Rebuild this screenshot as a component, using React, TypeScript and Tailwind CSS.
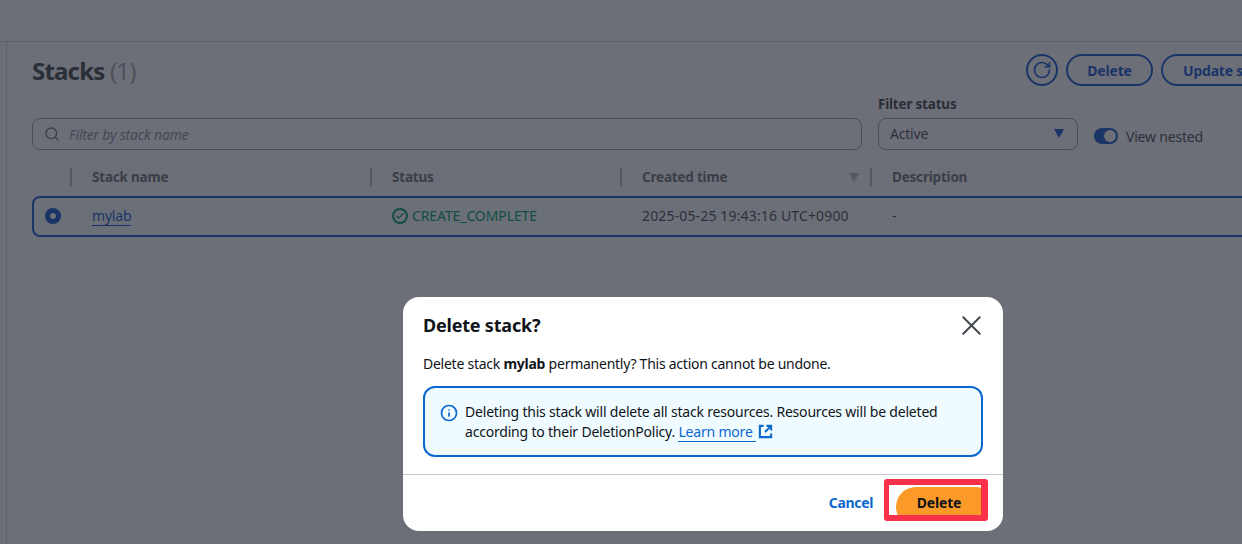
import React from 'react';
import { Check, Info, RotateCw, Search, X } from 'lucide-react';

const font = { fontFamily: '"Noto Sans", "Open Sans", sans-serif' };

const HeaderCell = ({ label, width, caret }: { label: string; width: string; caret?: boolean }) => (
  <div className={`flex items-center h-[19px] border-l-2 border-[#bcbcbc] pl-5 pr-3 font-bold text-[#6f7272] text-[13.5px] tracking-[-0.2px] ${width}`}>
    <span className="flex-1 whitespace-nowrap">{label}</span>
    {caret && <span className="w-0 h-0 border-x-[5px] border-x-transparent border-t-[9px] border-t-[#bcbcbc] mr-[-1px]"></span>}
  </div>
);

const StacksPage = () => (
  <div className="w-[1242px] h-[544px] bg-white text-[#4a4d52] overflow-hidden">
    <div className="h-[42px] border-b border-[#d3d4d6]"></div>
    <div className="ml-[6px] h-[502px] border-l border-[#d3d4d6] pl-[25px]">
      <div className="flex items-start w-[1300px] pt-[12px]">
        <h1 className="w-[994px] pt-px text-[24px] leading-[32px] font-bold tracking-[-0.8px] text-[#424542]">
          Stacks <span className="font-normal text-[#a5a8ab]">(1)</span>
        </h1>
        <div className="flex items-center gap-2">
          <button className="w-8 h-8 rounded-full border-2 border-[#1558d0] text-[#1558d0] flex items-center justify-center">
            <RotateCw size={20} strokeWidth={2} />
          </button>
          <button className="w-[87px] h-8 rounded-full border-2 border-[#1558d0] text-[#1558d0] text-[14px] font-bold tracking-[-0.2px]">Delete</button>
          <button className="w-[150px] h-8 rounded-full border-2 border-[#1558d0] text-[#1558d0] text-[14px] font-bold tracking-[-0.2px] text-left pl-5 whitespace-nowrap">Update stack</button>
        </div>
      </div>
      <div className="flex items-end mt-[7px]">
        <div className="w-[830px] h-8 rounded-lg border border-[#a0a2a4] flex items-center pl-[11px]">
          <Search size={16} className="text-[#6f7272]" strokeWidth={2} />
          <span className="ml-[9px] text-[14px] italic tracking-[-0.2px] text-[#8f9296]">Filter by stack name</span>
        </div>
        <div className="ml-4 w-[200px]">
          <div className="text-[13.5px] leading-[20px] font-bold tracking-[-0.2px] text-[#424542] mb-[4px]">Filter status</div>
          <div className="h-8 rounded-lg border border-[#a0a2a4] flex items-center justify-between pl-[11px] pr-[13px] pb-[2px] text-[14px] tracking-[-0.2px]">
            <span>Active</span>
            <span className="w-0 h-0 border-x-[5px] border-x-transparent border-t-[9px] border-t-[#1558d0]"></span>
          </div>
        </div>
        <div className="ml-4 h-8 flex items-center gap-2 pt-[4px]">
          <div className="w-6 h-4 rounded-full bg-[#1558d0] flex items-center justify-end pr-[2px]">
            <div className="w-3 h-3 rounded-full bg-white"></div>
          </div>
          <span className="text-[14px] tracking-[-0.2px] whitespace-nowrap">View nested</span>
        </div>
      </div>
      <div className="flex items-center mt-[18px] ml-[38px] w-[1300px]">
        <HeaderCell label="Stack name" width="w-[300px]" />
        <HeaderCell label="Status" width="w-[250px]" />
        <HeaderCell label="Created time" width="w-[250px]" caret />
        <HeaderCell label="Description" width="w-[300px]" />
      </div>
      <div className="flex items-center mt-[9px] h-[41px] w-[1300px] pb-[2px] rounded-l-lg border-2 border-[#1558d0] bg-[#fbffff] text-[14px]">
        <div className="w-[37px] pl-[11px]">
          <div className="w-4 h-4 rounded-full border-[5px] border-[#1558d0] bg-white"></div>
        </div>
        <div className="w-[300px] pl-[21px]">
          <span className="text-[#1558d0] border-b border-[#1558d0] tracking-[-0.2px]">mylab</span>
        </div>
        <div className="w-[250px] pl-[21px] flex items-center gap-1 text-[#00a060]">
          <span className="w-4 h-4 rounded-full border-2 border-[#00a060] flex items-center justify-center">
            <Check size={10} strokeWidth={3} />
          </span>
          <span className="tracking-[-0.1px]">CREATE_COMPLETE</span>
        </div>
        <div className="w-[250px] pl-[21px] whitespace-nowrap tracking-[0.15px]">2025-05-25 19:43:16 UTC+0900</div>
        <div className="pl-[21px]">-</div>
      </div>
    </div>
  </div>
);

const DeleteDialog = () => (
  <div className="absolute inset-0 bg-[rgba(29,34,48,0.65)] pl-[403px] pt-[297px]">
    <div className="w-[600px] h-[234px] bg-white rounded-2xl text-[#0f141a] text-[14px] tracking-[-0.2px]">
      <div className="flex items-center justify-between h-[56px] pl-5 pr-[15px]">
        <h2 className="text-[18px] font-bold">Delete stack?</h2>
        <X size={33} strokeWidth={1.4} className="text-[#424650]" />
      </div>
      <div className="px-5">
        <p className="leading-[20px] pt-px tracking-[-0.25px]">
          Delete stack <b>mylab</b> permanently? This action cannot be undone.
        </p>
        <div className="mt-[12px] h-[71px] rounded-xl border-2 border-[#0b68cf] bg-[#f0fbff] flex pl-[16px] pr-4 pt-[14px]">
          <Info size={18} strokeWidth={2.3} className="text-[#0b68cf] shrink-0 mt-[2px] ml-[-1px]" />
          <p className="ml-[7px] leading-[20px]">
            Deleting this stack will delete all stack resources. Resources will be deleted
            <br />
            according to their DeletionPolicy.{' '}
            <span className="text-[#0b68cf] border-b border-[#0b68cf] pr-[3px]">Learn more</span>
            <svg width="15" height="15" viewBox="0 0 16 16" fill="none" stroke="#0b68cf" strokeWidth="2.2" className="inline ml-[2px] align-[-2px]">
              <path d="M6 2H2v12h12v-4" />
              <path d="M9 2h5v5" />
              <path d="M14 2 7.5 8.5" />
            </svg>
          </p>
        </div>
      </div>
      <div className="mt-[17px] border-t border-[#c6c6cd] flex justify-end items-start pr-[15px] pt-[4px]">
        <span className="font-bold text-[#0b68cf] mt-[13px] mr-[11px] tracking-[-0.35px]">Cancel</span>
        <div className="w-[104px] h-[42px] border-y-[6px] border-l-[5px] border-r-[7px] border-[#f8304a] rounded-[3px] overflow-hidden pl-[7px] pt-[2px]">
          <div className="h-[40px] w-[100px] rounded-t-[20px] rounded-bl-[20px] bg-[#fb9a28] font-bold text-center pr-[14px] pt-[5px] text-[#0f141a]">
            Delete
          </div>
        </div>
      </div>
    </div>
  </div>
);

export default function App(): React.JSX.Element {
  return (
    <div className="relative w-[1242px] h-[544px] overflow-hidden" style={font}>
      <StacksPage />
      <DeleteDialog />
    </div>
  );
}
